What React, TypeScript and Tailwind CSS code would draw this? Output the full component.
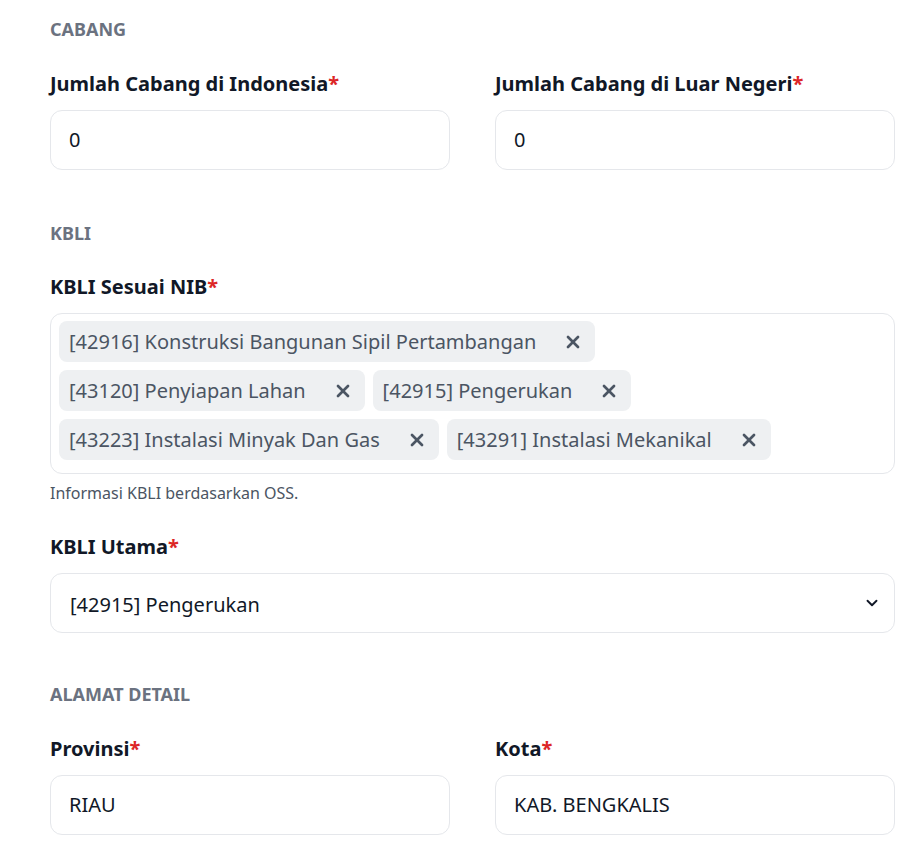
import { X, ChevronDown } from "lucide-react";

const kbli = [
    "[42916] Konstruksi Bangunan Sipil Pertambangan",
    "[43120] Penyiapan Lahan",
    "[42915] Pengerukan",
    "[43223] Instalasi Minyak Dan Gas",
    "[43291] Instalasi Mekanikal",
];

function SectionTitle({ children }: { children: React.ReactNode }) {
    return <div className="text-lg font-bold leading-6 text-[#6b7280] uppercase">{children}</div>;
}

function Label({ children }: { children: React.ReactNode }) {
    return (
        <div className="text-xl font-bold leading-7 text-[#111827]">
            {children}
            <span className="text-[#dc2626]">*</span>
        </div>
    );
}

function Input({ value }: { value: string }) {
    return (
        <div className="mt-3 h-[60px] rounded-xl border border-[#e5e7eb] bg-white px-[18px] flex items-center text-xl text-[#111827]">
            {value}
        </div>
    );
}

export default function App() {
    return (
        <div
            className="min-h-screen bg-white pl-[50px] pr-[25px] pt-[17px] pb-10"
            style={{ fontFamily: "'Noto Sans', 'Open Sans', sans-serif" }}
        >
            {/* Cabang */}
            <SectionTitle>Cabang</SectionTitle>
            <div className="mt-[29px] grid grid-cols-2 gap-[45px]">
                <div>
                    <Label>Jumlah Cabang di Indonesia</Label>
                    <Input value="0" />
                </div>
                <div>
                    <Label>Jumlah Cabang di Luar Negeri</Label>
                    <Input value="0" />
                </div>
            </div>

            {/* KBLI */}
            <div className="mt-[51px]">
                <SectionTitle>KBLI</SectionTitle>
            </div>
            <div className="mt-[28px]">
                <Label>KBLI Sesuai NIB</Label>
                <div className="mt-3 rounded-xl border border-[#e5e7eb] bg-white px-2 pt-[7px] pb-[13px] flex flex-wrap gap-x-2 gap-y-2">
                    {kbli.map((k) => (
                        <div
                            key={k}
                            className="h-[41px] rounded-lg bg-[#eef0f2] pl-[10px] pr-3 flex items-center gap-[27px] text-xl text-[#4b5563]"
                        >
                            <span>{k}</span>
                            <X size={20} strokeWidth={3.2} className="text-[#4b5563]" />
                        </div>
                    ))}
                </div>
                <div className="mt-[9px] text-base leading-5 text-[#4b5563]">Informasi KBLI berdasarkan OSS.</div>
            </div>

            <div className="mt-[30px]">
                <Label>KBLI Utama</Label>
                <div className="mt-3 h-[60px] rounded-xl border border-[#e5e7eb] bg-white pl-[19px] pr-[13px] flex items-center justify-between text-xl text-[#111827]">
                    <span className="pt-1">[42915] Pengerukan</span>
                    <ChevronDown size={18} strokeWidth={2.5} className="text-[#111827]" />
                </div>
            </div>

            {/* Alamat */}
            <div className="mt-[49px]">
                <SectionTitle>Alamat Detail</SectionTitle>
            </div>
            <div className="mt-[29px] grid grid-cols-2 gap-[45px]">
                <div>
                    <Label>Provinsi</Label>
                    <Input value="RIAU" />
                </div>
                <div>
                    <Label>Kota</Label>
                    <Input value="KAB. BENGKALIS" />
                </div>
            </div>
        </div>
    );
}
